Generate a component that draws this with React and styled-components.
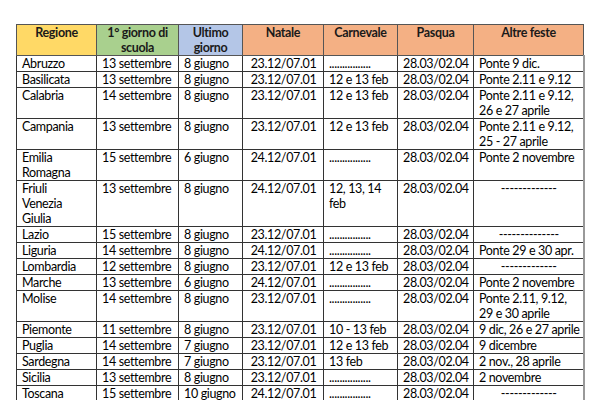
import React from "react";
import styled, { createGlobalStyle } from "styled-components";

const DOTS = "................";
const DASH = "-------------";

const rows = [
	["Abruzzo", "13 settembre", "8 giugno", "23.12/07.01", DOTS, "28.03/02.04", "Ponte 9 dic."],
	["Basilicata", "13 settembre", "8 giugno", "23.12/07.01", "12 e 13 feb", "28.03/02.04", "Ponte 2.11 e 9.12"],
	["Calabria", "14 settembre", "8 giugno", "23.12/07.01", "12 e 13 feb", "28.03/02.04", "Ponte 2.11 e 9.12,\n26 e 27 aprile"],
	["Campania", "13 settembre", "8 giugno", "23.12/07.01", "12 e 13 feb", "28.03/02.04", "Ponte 2.11 e 9.12,\n25 - 27 aprile"],
	["Emilia\nRomagna", "15 settembre", "6 giugno", "24.12/07.01", DOTS, "28.03/02.04", "Ponte 2 novembre"],
	["Friuli\nVenezia\nGiulia", "13 settembre", "8 giugno", "24.12/07.01", "12, 13, 14\nfeb", "28.03/02.04", DASH],
	["Lazio", "15 settembre", "8 giugno", "23.12/07.01", DOTS, "28.03/02.04", DASH + "-"],
	["Liguria", "14 settembre", "8 giugno", "24.12/07.01", DOTS, "28.03/02.04", "Ponte 29 e 30 apr."],
	["Lombardia", "12 settembre", "8 giugno", "23.12/07.01", "12 e 13 feb", "28.03/02.04", DASH],
	["Marche", "13 settembre", "6 giugno", "24.12/07.01", DOTS, "28.03/02.04", "Ponte 2 novembre"],
	["Molise", "14 settembre", "8 giugno", "23.12/07.01", DOTS, "28.03/02.04", "Ponte 2.11, 9.12,\n29 e 30 aprile"],
	["Piemonte", "11 settembre", "8 giugno", "23.12/07.01", "10 - 13 feb", "28.03/02.04", "9 dic, 26 e 27 aprile"],
	["Puglia", "14 settembre", "7 giugno", "23.12/07.01", "12 e 13 feb", "28.03/02.04", "9 dicembre"],
	["Sardegna", "14 settembre", "7 giugno", "23.12/07.01", "13 feb", "28.03/02.04", "2 nov., 28 aprile"],
	["Sicilia", "13 settembre", "8 giugno", "23.12/07.01", DOTS, "28.03/02.04", "2 novembre"],
	["Toscana", "15 settembre", "10 giugno", "24.12/07.01", DOTS, "28.03/02.04", DASH],
];

const headers = [
	{ label: "Regione", bg: "#ffd966", w: 80 },
	{ label: "1° giorno di\nscuola", bg: "#a9d08e", w: 82 },
	{ label: "Ultimo\ngiorno", bg: "#b4c6e7", w: 64 },
	{ label: "Natale", bg: "#f4b084", w: 81 },
	{ label: "Carnevale", bg: "#f4b084", w: 74 },
	{ label: "Pasqua", bg: "#f4b084", w: 76 },
	{ label: "Altre feste", bg: "#f4b084", w: 110 },
];

// Righe che nel documento occupano più di una riga di testo
const lineCount = {
	Calabria: 2,
	Campania: 2,
	"Emilia\nRomagna": 2,
	"Friuli\nVenezia\nGiulia": 3,
	Molise: 2,
};

const GlobalStyle = createGlobalStyle`
	body {
		margin: 0;
		background: #fff;
		font-family: Lato, "Open Sans", sans-serif;
	}
`;

const Page = styled.div`
	padding: 24px 0 0 16px;
`;

const Table = styled.table`
	border-collapse: collapse;
	table-layout: fixed;
	width: 568px;
	font-size: 12.5px;
	letter-spacing: -0.35px;
	line-height: 15px;
	color: #000;
`;

const HeadCell = styled.th`
	background: ${({ bg }) => bg};
	border: 1px solid #555;
	padding: 0 4px;
	font-weight: 700;
	text-align: center;
	vertical-align: top;
	white-space: pre;
	color: #1a1a1a;
`;

const Cell = styled.td`
	border: 1px solid #333;
	border-left-color: ${({ soft }) => (soft ? "#888" : "#333")};
	padding: 0 4px 0 5px;
	vertical-align: top;
	text-align: ${({ center }) => (center ? "center" : "left")};
	white-space: pre;
	overflow: hidden;
`;

const Row = styled.tr`
	height: ${({ lines }) => lines * 15 + 1}px;

	td:last-child {
		border-right: 2px solid #999;
	}
`;

const App = () => (
	<Page>
		<GlobalStyle />
		<Table>
			<colgroup>
				{headers.map((h) => (
					<col key={h.label} style={{ width: h.w }} />
				))}
			</colgroup>
			<thead>
				<tr>
					{headers.map((h) => (
						<HeadCell key={h.label} bg={h.bg}>
							{h.label}
						</HeadCell>
					))}
				</tr>
			</thead>
			<tbody>
				{rows.map((r, i) => (
					<Row key={r[0]} lines={lineCount[r[0]] ?? 1}>
						<Cell>{r[0]}</Cell>
						<Cell>{r[1]}</Cell>
						<Cell>{r[2]}</Cell>
						<Cell center>{r[3]}</Cell>
						<Cell>{r[4]}</Cell>
						<Cell>{r[5]}</Cell>
						<Cell soft={i >= 4} center={r[6].startsWith("-")}>
							{r[6]}
						</Cell>
					</Row>
				))}
			</tbody>
		</Table>
	</Page>
);

export default App;
